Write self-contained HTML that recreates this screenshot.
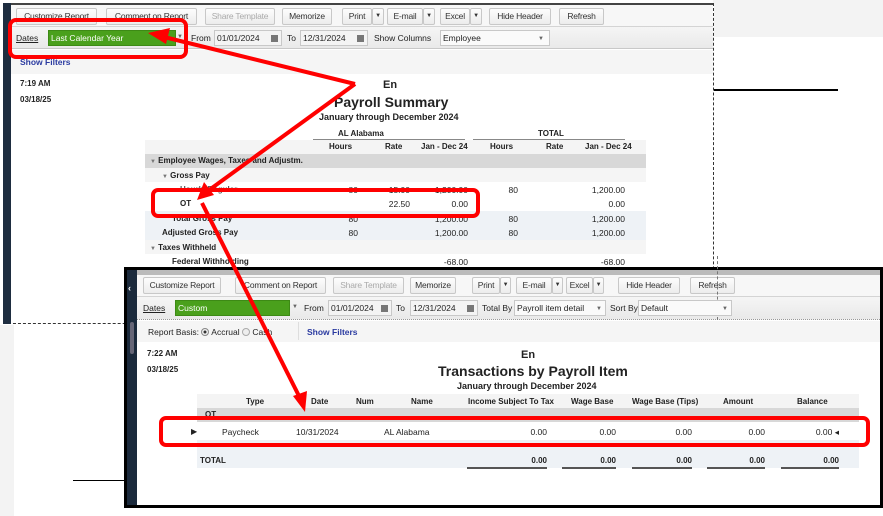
<!DOCTYPE html>
<html><head><meta charset="utf-8"><style>
*{box-sizing:border-box;margin:0;padding:0}
body{width:883px;height:516px;position:relative;overflow:hidden;background:#fff;font-family:"Liberation Sans",Arial,sans-serif;font-size:8.5px;color:#222}
.a{position:absolute;white-space:nowrap}
.btn{position:absolute;height:17px;border:1px solid #c8c8c8;border-radius:2px;background:linear-gradient(#fdfdfd,#ececec);font-size:8.5px;color:#333;text-align:center;line-height:15px;white-space:nowrap;overflow:hidden;letter-spacing:-0.2px}
.dis{color:#aaa}
.box{position:absolute;height:16px;border:1px solid #c8c8c8;background:#f4f4f4;font-size:8.5px;line-height:14px;padding-left:2px;color:#222;white-space:nowrap;overflow:hidden}
.cal{position:absolute;right:3px;top:4px;width:7px;height:7px;background:#777}
.dd{position:absolute;right:3px;top:0;font-size:6px;color:#666}
.green{position:absolute;height:16px;background:#4aa01c;color:#fff;font-size:8.5px;line-height:15px;padding-left:2px;border:1px solid #3d8a15}
.b{font-weight:bold}
.h{font-weight:bold;font-size:8px}
.r{text-align:right}
</style></head><body>
<div class="a" style="left:713px;top:0;width:170px;height:37px;background:#f3f3f3"></div>
<div class="a" style="left:0;top:325px;width:14px;height:191px;background:#f3f3f3"></div>
<div class="a" style="left:713px;top:89px;width:125px;height:2px;background:#000"></div>
<div class="a" style="left:73px;top:480px;width:52px;height:1px;background:#000"></div>

<!-- WINDOW 1 -->
<div class="a" style="left:3px;top:3px;width:711px;height:321px;background:#fff;border-top:2px solid #444;border-right:1px dashed #333;border-bottom:1px dashed #333"></div>
<div class="a" style="left:3px;top:3px;width:8px;height:321px;background:#1e2d40"></div>
<div class="a" style="left:11px;top:5px;width:702px;height:22px;background:#f7f7f7;border-bottom:1px solid #d4d4d4"></div>
<div class="a" style="left:11px;top:27px;width:702px;height:22px;background:linear-gradient(#f5f5f5,#e9e9e9);border-bottom:1px solid #c8c8c8"></div>
<div class="a" style="left:11px;top:50px;width:702px;height:24px;background:#f5f5f5"></div>
<div class="btn" style="left:16px;top:8px;width:81px">Customize Report</div>
<div class="btn" style="left:106px;top:8px;width:91px">Comment on Report</div>
<div class="btn dis" style="left:205px;top:8px;width:70px">Share Template</div>
<div class="btn" style="left:282px;top:8px;width:50px">Memorize</div>
<div class="btn" style="left:342px;top:8px;width:30px">Print</div><div class="btn" style="left:372px;top:8px;width:12px;font-size:6px">▼</div>
<div class="btn" style="left:387px;top:8px;width:36px">E-mail</div><div class="btn" style="left:423px;top:8px;width:12px;font-size:6px">▼</div>
<div class="btn" style="left:440px;top:8px;width:30px">Excel</div><div class="btn" style="left:470px;top:8px;width:12px;font-size:6px">▼</div>
<div class="btn" style="left:489px;top:8px;width:62px">Hide Header</div>
<div class="btn" style="left:559px;top:8px;width:45px">Refresh</div>
<div class="a" style="left:16px;top:33px;text-decoration:underline">Dates</div>
<div class="green" style="left:48px;top:30px;width:128px">Last Calendar Year</div>
<div class="dd" style="left:177px;top:34px">▼</div>
<div class="a" style="left:191px;top:33px">From</div>
<div class="box" style="left:214px;top:30px;width:68px">01/01/2024<span class="cal"></span></div>
<div class="a" style="left:287px;top:33px">To</div>
<div class="box" style="left:300px;top:30px;width:68px">12/31/2024<span class="cal"></span></div>
<div class="a" style="left:374px;top:33px">Show Columns</div>
<div class="box" style="left:440px;top:30px;width:110px;background:#fafafa">Employee<span class="dd" style="top:1px;right:5px">▼</span></div>
<div class="a b" style="left:20px;top:57px;color:#2a3aa0">Show Filters</div>
<div class="a b" style="left:20px;top:79px;font-size:8px">7:19 AM</div>
<div class="a b" style="left:20px;top:95px;font-size:8px">03/18/25</div>
<div class="a b" style="left:383px;top:79px;font-size:11px">En</div>
<div class="a b" style="left:334px;top:94px;font-size:14px">Payroll Summary</div>
<div class="a b" style="left:319px;top:112px;font-size:9px">January through December 2024</div>
<div class="a h" style="left:338px;top:129px">AL Alabama</div>
<div class="a" style="left:313px;top:139px;width:152px;height:1px;background:#888"></div>
<div class="a h" style="left:538px;top:129px">TOTAL</div>
<div class="a" style="left:473px;top:139px;width:152px;height:1px;background:#888"></div>
<div class="a" style="left:145px;top:140px;width:501px;height:14px;background:#f4f4f4"></div>
<div class="a h" style="left:329px;top:142px">Hours</div>
<div class="a h" style="left:385px;top:142px">Rate</div>
<div class="a h" style="left:421px;top:142px">Jan - Dec 24</div>
<div class="a h" style="left:490px;top:142px">Hours</div>
<div class="a h" style="left:546px;top:142px">Rate</div>
<div class="a h" style="left:585px;top:142px">Jan - Dec 24</div>
<div class="a" style="left:145px;top:154px;width:501px;height:14px;background:#d8d8d8"></div>
<div class="a h" style="left:150px;top:156px"><span style="color:#777;font-size:6px">▼</span> Employee Wages, Taxes and Adjustm.</div>
<div class="a" style="left:145px;top:168px;width:501px;height:14px;background:#f5f5f5"></div>
<div class="a h" style="left:162px;top:171px"><span style="color:#777;font-size:6px">▼</span> Gross Pay</div>
<div class="a h" style="left:180px;top:185px;color:#555">Hourly Regular</div>
<div class="a r" style="left:330px;top:185px;width:28px">80</div>
<div class="a r" style="left:380px;top:185px;width:30px">15.00</div>
<div class="a r" style="left:420px;top:185px;width:48px">1,200.00</div>
<div class="a r" style="left:490px;top:185px;width:28px">80</div>
<div class="a r" style="left:575px;top:185px;width:50px">1,200.00</div>
<div class="a h" style="left:180px;top:199px">OT</div>
<div class="a r" style="left:380px;top:199px;width:30px">22.50</div>
<div class="a r" style="left:420px;top:199px;width:48px">0.00</div>
<div class="a r" style="left:575px;top:199px;width:50px">0.00</div>
<div class="a" style="left:145px;top:211px;width:501px;height:15px;background:#eef2f6"></div>
<div class="a h" style="left:172px;top:214px">Total Gross Pay</div>
<div class="a r" style="left:330px;top:214px;width:28px">80</div>
<div class="a r" style="left:420px;top:214px;width:48px">1,200.00</div>
<div class="a r" style="left:490px;top:214px;width:28px">80</div>
<div class="a r" style="left:575px;top:214px;width:50px">1,200.00</div>
<div class="a" style="left:145px;top:226px;width:501px;height:14px;background:#eef2f6"></div>
<div class="a h" style="left:162px;top:228px">Adjusted Gross Pay</div>
<div class="a r" style="left:330px;top:228px;width:28px">80</div>
<div class="a r" style="left:420px;top:228px;width:48px">1,200.00</div>
<div class="a r" style="left:490px;top:228px;width:28px">80</div>
<div class="a r" style="left:575px;top:228px;width:50px">1,200.00</div>
<div class="a" style="left:145px;top:240px;width:501px;height:14px;background:#f5f5f5"></div>
<div class="a h" style="left:150px;top:243px"><span style="color:#777;font-size:6px">▼</span> Taxes Withheld</div>
<div class="a h" style="left:172px;top:257px">Federal Withholding</div>
<div class="a r" style="left:420px;top:257px;width:48px">-68.00</div>
<div class="a r" style="left:575px;top:257px;width:50px">-68.00</div>

<!-- WINDOW 2 -->
<div class="a" style="left:124px;top:267px;width:759px;height:241px;background:#fff;border:3px solid #000"></div>
<div class="a" style="left:127px;top:270px;width:10px;height:235px;background:#1b2a3c"></div>
<div class="a" style="left:128px;top:283px;color:#fff;font-size:9px;font-weight:bold">‹</div>
<div class="a" style="left:130px;top:322px;width:4px;height:32px;background:#667;border-radius:2px"></div>
<div class="a" style="left:137px;top:270px;width:743px;height:5px;background:#bbb"></div>
<div class="a" style="left:137px;top:275px;width:743px;height:22px;background:#f7f7f7;border-bottom:1px solid #d4d4d4"></div>
<div class="a" style="left:137px;top:297px;width:743px;height:23px;background:linear-gradient(#f5f5f5,#e9e9e9);border-bottom:1px dotted #999"></div>
<div class="a" style="left:137px;top:321px;width:743px;height:21px;background:#f5f5f5"></div>
<div class="btn" style="left:143px;top:277px;width:78px">Customize Report</div>
<div class="btn" style="left:235px;top:277px;width:91px">Comment on Report</div>
<div class="btn dis" style="left:333px;top:277px;width:71px">Share Template</div>
<div class="btn" style="left:410px;top:277px;width:46px">Memorize</div>
<div class="btn" style="left:472px;top:277px;width:28px">Print</div><div class="btn" style="left:500px;top:277px;width:11px;font-size:6px">▼</div>
<div class="btn" style="left:516px;top:277px;width:36px">E-mail</div><div class="btn" style="left:552px;top:277px;width:11px;font-size:6px">▼</div>
<div class="btn" style="left:566px;top:277px;width:27px">Excel</div><div class="btn" style="left:593px;top:277px;width:11px;font-size:6px">▼</div>
<div class="btn" style="left:618px;top:277px;width:62px">Hide Header</div>
<div class="btn" style="left:690px;top:277px;width:45px">Refresh</div>
<div class="a" style="left:717px;top:256px;width:0;height:64px;border-left:1px dashed #777"></div>
<div class="a" style="left:143px;top:303px;text-decoration:underline">Dates</div>
<div class="green" style="left:175px;top:300px;width:115px">Custom</div>
<div class="dd" style="left:292px;top:304px">▼</div>
<div class="a" style="left:304px;top:303px">From</div>
<div class="box" style="left:328px;top:300px;width:64px">01/01/2024<span class="cal"></span></div>
<div class="a" style="left:396px;top:303px">To</div>
<div class="box" style="left:410px;top:300px;width:68px">12/31/2024<span class="cal"></span></div>
<div class="a" style="left:482px;top:303px">Total By</div>
<div class="box" style="left:514px;top:300px;width:92px;background:#fafafa">Payroll item detail<span class="dd" style="top:1px">▼</span></div>
<div class="a" style="left:610px;top:303px">Sort By</div>
<div class="box" style="left:638px;top:300px;width:94px;background:#fafafa">Default<span class="dd" style="top:1px">▼</span></div>
<div class="a" style="left:148px;top:327px">Report Basis: <span style="display:inline-block;width:8px;height:8px;border:1px solid #888;border-radius:50%;vertical-align:-1px;background:radial-gradient(#333 30%,#eee 40%)"></span> Accrual <span style="display:inline-block;width:8px;height:8px;border:1px solid #aaa;border-radius:50%;vertical-align:-1px;background:#eee"></span> Cash</div>
<div class="a" style="left:298px;top:322px;width:1px;height:18px;background:#ddd"></div>
<div class="a b" style="left:307px;top:327px;color:#2a3aa0">Show Filters</div>
<div class="a b" style="left:147px;top:349px;font-size:8px">7:22 AM</div>
<div class="a b" style="left:147px;top:365px;font-size:8px">03/18/25</div>
<div class="a b" style="left:521px;top:349px;font-size:11px">En</div>
<div class="a b" style="left:438px;top:363px;font-size:14px">Transactions by Payroll Item</div>
<div class="a b" style="left:457px;top:381px;font-size:9px">January through December 2024</div>
<div class="a" style="left:197px;top:394px;width:662px;height:14px;background:#f4f4f4"></div>
<div class="a h" style="left:246px;top:397px">Type</div>
<div class="a h" style="left:311px;top:397px">Date</div>
<div class="a h" style="left:356px;top:397px">Num</div>
<div class="a h" style="left:411px;top:397px">Name</div>
<div class="a h" style="left:468px;top:397px">Income Subject To Tax</div>
<div class="a h" style="left:571px;top:397px">Wage Base</div>
<div class="a h" style="left:632px;top:397px">Wage Base (Tips)</div>
<div class="a h" style="left:723px;top:397px">Amount</div>
<div class="a h" style="left:797px;top:397px">Balance</div>
<div class="a" style="left:197px;top:408px;width:662px;height:14px;background:#d8d8d8"></div>
<div class="a h" style="left:205px;top:410px">OT</div>
<div class="a" style="left:191px;top:427px;font-size:8px">▶</div>
<div class="a" style="left:222px;top:427px">Paycheck</div>
<div class="a" style="left:296px;top:427px">10/31/2024</div>
<div class="a" style="left:384px;top:427px">AL Alabama</div>
<div class="a r" style="left:497px;top:427px;width:50px">0.00</div>
<div class="a r" style="left:566px;top:427px;width:50px">0.00</div>
<div class="a r" style="left:642px;top:427px;width:50px">0.00</div>
<div class="a r" style="left:715px;top:427px;width:50px">0.00</div>
<div class="a r" style="left:789px;top:427px;width:50px">0.00 ◂</div>
<div class="a" style="left:197px;top:440px;width:662px;height:13px;background:#eef2f6"></div>
<div class="a" style="left:197px;top:453px;width:662px;height:15px;background:#eef2f6"></div>
<div class="a h" style="left:200px;top:456px">TOTAL</div>
<div class="a h r" style="left:497px;top:456px;width:50px">0.00</div>
<div class="a h r" style="left:566px;top:456px;width:50px">0.00</div>
<div class="a h r" style="left:642px;top:456px;width:50px">0.00</div>
<div class="a h r" style="left:715px;top:456px;width:50px">0.00</div>
<div class="a h r" style="left:789px;top:456px;width:50px">0.00</div>
<div class="a" style="left:467px;top:467px;width:80px;height:2px;border-top:1px solid #555;border-bottom:1px solid #555"></div>
<div class="a" style="left:562px;top:467px;width:54px;height:2px;border-top:1px solid #555;border-bottom:1px solid #555"></div>
<div class="a" style="left:632px;top:467px;width:60px;height:2px;border-top:1px solid #555;border-bottom:1px solid #555"></div>
<div class="a" style="left:707px;top:467px;width:58px;height:2px;border-top:1px solid #555;border-bottom:1px solid #555"></div>
<div class="a" style="left:781px;top:467px;width:58px;height:2px;border-top:1px solid #555;border-bottom:1px solid #555"></div>

<svg class="a" style="left:0;top:0" width="883" height="516" viewBox="0 0 883 516">
<g fill="none" stroke="#f00" stroke-width="4">
<rect x="10" y="20" width="176" height="37" rx="6"/>
<rect x="153" y="190" width="325" height="26" rx="5"/>
<rect x="161" y="418" width="707" height="27" rx="5"/>
<line x1="355" y1="84" x2="160" y2="36"/>
<line x1="355" y1="84" x2="205" y2="193"/>
<line x1="202" y1="203" x2="300" y2="398"/>
</g>
<g fill="#f00">
<polygon points="148,33 170,28 166,44"/>
<polygon points="197,200 204,182 214,195"/>
<polygon points="305,412 293,396 307,391"/>
</g>
</svg>
</body></html>
